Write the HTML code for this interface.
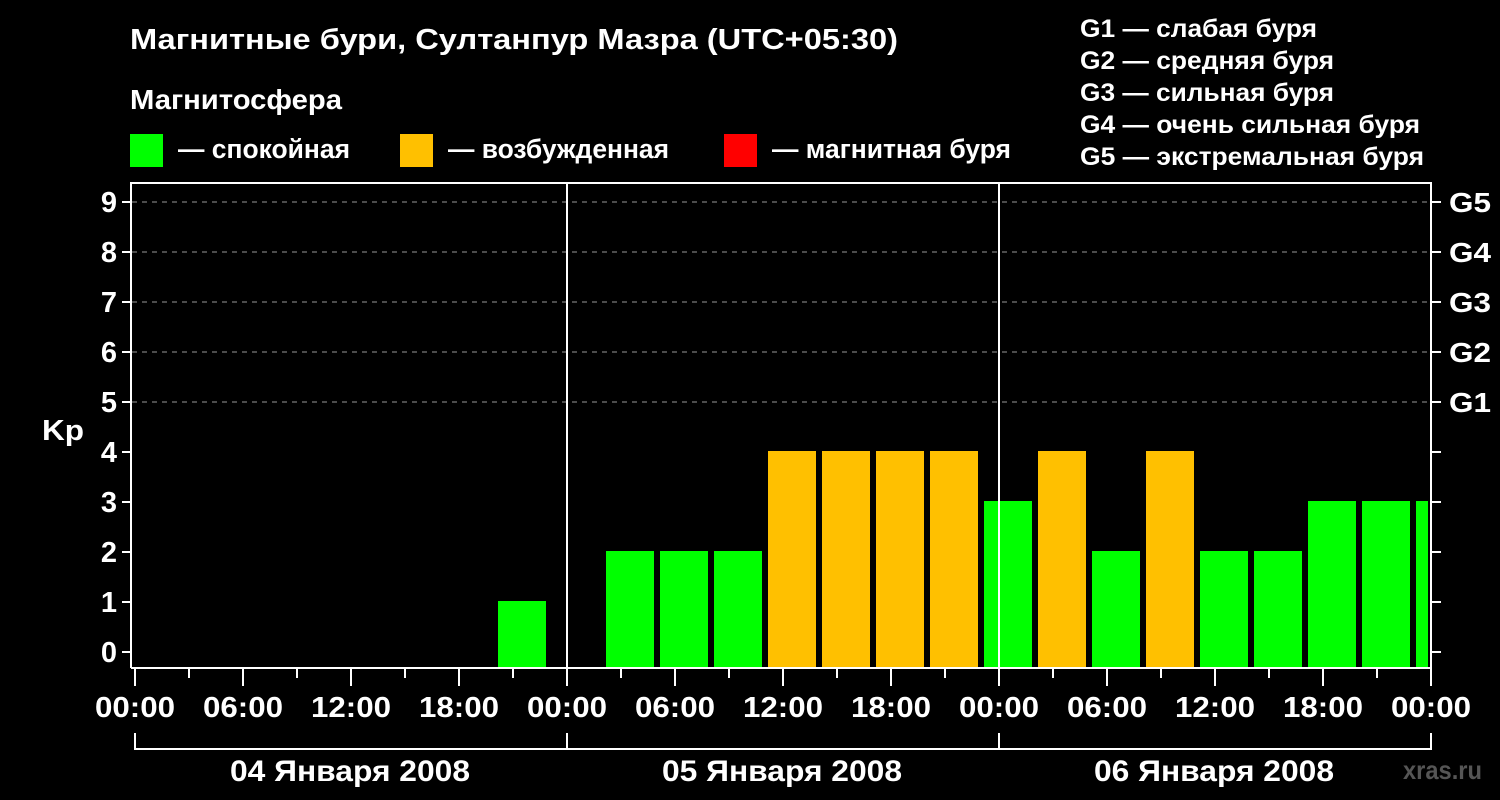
<!DOCTYPE html><html><head><meta charset="utf-8"><style>html,body{margin:0;background:#000;}svg{display:block}text{font-family:"Liberation Sans",Arial,sans-serif;font-weight:bold;fill:#fff}</style></head><body>
<svg width="1500" height="800" viewBox="0 0 1500 800">
<text x="130" y="49" font-size="29" textLength="768" lengthAdjust="spacingAndGlyphs">Магнитные бури, Султанпур Мазра (UTC+05:30)</text>
<text x="130" y="109" font-size="28" textLength="212" lengthAdjust="spacingAndGlyphs">Магнитосфера</text>
<rect x="130" y="134" width="33" height="33" fill="#00ff00"/><text x="178" y="158" font-size="27" textLength="172" lengthAdjust="spacingAndGlyphs">— спокойная</text>
<rect x="400" y="134" width="33" height="33" fill="#ffc000"/><text x="448" y="158" font-size="27" textLength="221" lengthAdjust="spacingAndGlyphs">— возбужденная</text>
<rect x="724" y="134" width="33" height="33" fill="#ff0000"/><text x="772" y="158" font-size="27" textLength="239" lengthAdjust="spacingAndGlyphs">— магнитная буря</text>
<g font-size="25"><text x="1080" y="37" textLength="237" lengthAdjust="spacingAndGlyphs">G1 — слабая буря</text><text x="1080" y="69" textLength="254" lengthAdjust="spacingAndGlyphs">G2 — средняя буря</text><text x="1080" y="101" textLength="254" lengthAdjust="spacingAndGlyphs">G3 — сильная буря</text><text x="1080" y="133" textLength="340" lengthAdjust="spacingAndGlyphs">G4 — очень сильная буря</text><text x="1080" y="165" textLength="344" lengthAdjust="spacingAndGlyphs">G5 — экстремальная буря</text></g>
<g stroke="#999" stroke-width="1" stroke-dasharray="5,5">
<line x1="132" y1="202" x2="1430" y2="202"/><line x1="132" y1="252" x2="1430" y2="252"/><line x1="132" y1="302" x2="1430" y2="302"/><line x1="132" y1="352" x2="1430" y2="352"/><line x1="132" y1="402" x2="1430" y2="402"/></g>
<g fill="#00ff00"><rect x="498" y="601" width="48" height="67"/><rect x="606" y="551" width="48" height="117"/><rect x="660" y="551" width="48" height="117"/><rect x="714" y="551" width="48" height="117"/><rect x="984" y="501" width="48" height="167"/><rect x="1092" y="551" width="48" height="117"/><rect x="1200" y="551" width="48" height="117"/><rect x="1254" y="551" width="48" height="117"/><rect x="1308" y="501" width="48" height="167"/><rect x="1362" y="501" width="48" height="167"/><rect x="1416" y="501" width="12" height="167"/></g>
<g fill="#ffc000"><rect x="768" y="451" width="48" height="217"/><rect x="822" y="451" width="48" height="217"/><rect x="876" y="451" width="48" height="217"/><rect x="930" y="451" width="48" height="217"/><rect x="1038" y="451" width="48" height="217"/><rect x="1146" y="451" width="48" height="217"/></g>
<g stroke="#fff" stroke-width="2" fill="none">
<polyline points="131,668 131,183 1431,183 1431,668 131,668"/>
<line x1="567" y1="183" x2="567" y2="668"/><line x1="999" y1="183" x2="999" y2="668"/>
<path d="M122 202h9M122 252h9M122 302h9M122 352h9M122 402h9M122 452h9M122 502h9M122 552h9M122 602h9M122 652h9"/>
<path d="M1431 202h10M1431 252h10M1431 302h10M1431 352h10M1431 402h10M1431 452h10M1431 502h10M1431 552h10M1431 602h10M1431 652h10"/>
<path d="M135 669v17M243 669v17M351 669v17M459 669v17M567 669v17M675 669v17M783 669v17M891 669v17M999 669v17M1107 669v17M1215 669v17M1323 669v17M1431 669v17"/>
<path d="M189 669v9M297 669v9M405 669v9M513 669v9M621 669v9M729 669v9M837 669v9M945 669v9M1053 669v9M1161 669v9M1269 669v9M1377 669v9"/>
<path d="M135 733v16H1431V733M567 733v16M999 733v16"/>
</g>
<g font-size="29" text-anchor="end"><text x="117" y="212">9</text><text x="117" y="262">8</text><text x="117" y="312">7</text><text x="117" y="362">6</text><text x="117" y="412">5</text><text x="117" y="462">4</text><text x="117" y="512">3</text><text x="117" y="562">2</text><text x="117" y="612">1</text><text x="117" y="662">0</text></g>
<text x="42" y="440" font-size="29" textLength="42" lengthAdjust="spacingAndGlyphs">Kp</text>
<g font-size="28"><text x="1449" y="212" textLength="42" lengthAdjust="spacingAndGlyphs">G5</text><text x="1449" y="262" textLength="42" lengthAdjust="spacingAndGlyphs">G4</text><text x="1449" y="312" textLength="42" lengthAdjust="spacingAndGlyphs">G3</text><text x="1449" y="362" textLength="42" lengthAdjust="spacingAndGlyphs">G2</text><text x="1449" y="412" textLength="42" lengthAdjust="spacingAndGlyphs">G1</text></g>
<g font-size="29"><text x="95" y="717" textLength="80" lengthAdjust="spacingAndGlyphs">00:00</text><text x="203" y="717" textLength="80" lengthAdjust="spacingAndGlyphs">06:00</text><text x="311" y="717" textLength="80" lengthAdjust="spacingAndGlyphs">12:00</text><text x="419" y="717" textLength="80" lengthAdjust="spacingAndGlyphs">18:00</text><text x="527" y="717" textLength="80" lengthAdjust="spacingAndGlyphs">00:00</text><text x="635" y="717" textLength="80" lengthAdjust="spacingAndGlyphs">06:00</text><text x="743" y="717" textLength="80" lengthAdjust="spacingAndGlyphs">12:00</text><text x="851" y="717" textLength="80" lengthAdjust="spacingAndGlyphs">18:00</text><text x="959" y="717" textLength="80" lengthAdjust="spacingAndGlyphs">00:00</text><text x="1067" y="717" textLength="80" lengthAdjust="spacingAndGlyphs">06:00</text><text x="1175" y="717" textLength="80" lengthAdjust="spacingAndGlyphs">12:00</text><text x="1283" y="717" textLength="80" lengthAdjust="spacingAndGlyphs">18:00</text><text x="1391" y="717" textLength="80" lengthAdjust="spacingAndGlyphs">00:00</text></g>
<g font-size="30"><text x="230" y="781" textLength="240" lengthAdjust="spacingAndGlyphs">04 Января 2008</text><text x="662" y="781" textLength="240" lengthAdjust="spacingAndGlyphs">05 Января 2008</text><text x="1094" y="781" textLength="240" lengthAdjust="spacingAndGlyphs">06 Января 2008</text></g>
<text x="1403" y="779" font-size="26" textLength="79" lengthAdjust="spacingAndGlyphs" style="fill:#555">xras.ru</text>
</svg></body></html>
